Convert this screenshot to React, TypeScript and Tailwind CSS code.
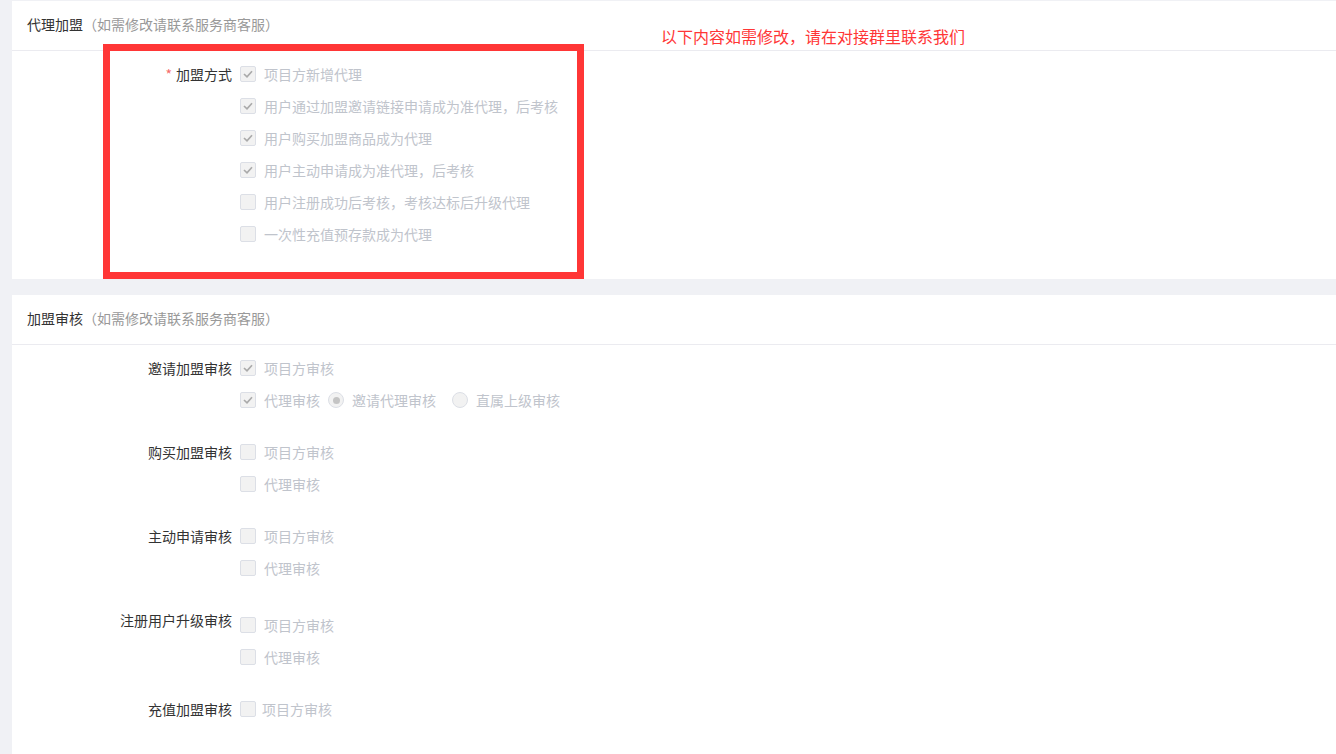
import React from "react";

const font = { fontFamily: '"Noto Sans CJK SC", "Microsoft YaHei", sans-serif' };

function Check({ checked }: { checked?: boolean }) {
  return (
    <span className="w-4 h-4 rounded-[2px] border border-[#dcdfe6] bg-[#f2f2f2] flex items-center justify-center shrink-0">
      {checked && (
        <svg width="10" height="8" viewBox="0 0 10 8">
          <path d="M1 4 L4 6.8 L9 1.3" fill="none" stroke="#aaaaaa" strokeWidth="1.7" />
        </svg>
      )}
    </span>
  );
}

function Radio({ checked }: { checked?: boolean }) {
  return (
    <span className="w-4 h-4 rounded-full border border-[#dcdfe6] bg-[#f2f2f2] flex items-center justify-center shrink-0">
      {checked && <span className="w-[7px] h-[7px] rounded-full bg-[#c4c4c4]" />}
    </span>
  );
}

function CheckItem({ label, checked, gap = "ml-2" }: { label: string; checked?: boolean; gap?: string }) {
  return (
    <span className="flex items-center">
      <Check checked={checked} />
      <span className={`${gap} text-[14px] text-[#c0c4cc] whitespace-nowrap`}>{label}</span>
    </span>
  );
}

function Row({ children }: { children: React.ReactNode }) {
  return <div className="h-8 flex items-center">{children}</div>;
}

function Group({
  label,
  required,
  children,
  offset,
}: {
  label: string;
  required?: boolean;
  children: React.ReactNode;
  offset?: boolean;
}) {
  return (
    <div className="flex">
      <div className="w-[220px] h-8 flex items-center justify-end text-[14px] text-[#333] whitespace-nowrap">
        {required && <span className="text-[#f56c6c] mr-1">*</span>}
        {label}
      </div>
      <div className={`ml-2 flex flex-col ${offset ? "pt-[5px]" : ""}`}>{children}</div>
    </div>
  );
}

function CardHeader({ title }: { title: string }) {
  return (
    <div className="h-[50px] border-b border-[#ebebf0] flex items-center pl-[15px] pb-[2px]">
      <span className="text-[14px] text-[#333]">{title}</span>
      <span className="text-[14px] text-[#999]">（如需修改请联系服务商客服）</span>
    </div>
  );
}

export default function App() {
  return (
    <div className="w-[1336px] h-[754px] overflow-hidden bg-[#f0f1f5] relative" style={font}>
      <div className="pl-3 pt-[1px]">
        <div className="bg-white">
          <CardHeader title="代理加盟" />
          <div className="pt-[7px] pb-[29px]">
            <Group label="加盟方式" required>
              <Row><CheckItem label="项目方新增代理" checked /></Row>
              <Row><CheckItem label="用户通过加盟邀请链接申请成为准代理，后考核" checked /></Row>
              <Row><CheckItem label="用户购买加盟商品成为代理" checked /></Row>
              <Row><CheckItem label="用户主动申请成为准代理，后考核" checked /></Row>
              <Row><CheckItem label="用户注册成功后考核，考核达标后升级代理" /></Row>
              <Row><CheckItem label="一次性充值预存款成为代理" /></Row>
            </Group>
          </div>
        </div>
        <div className="bg-white mt-4 h-[500px]">
          <CardHeader title="加盟审核" />
          <div className="pt-[7px] flex flex-col gap-5">
            <Group label="邀请加盟审核">
              <Row><CheckItem label="项目方审核" checked /></Row>
              <Row>
                <CheckItem label="代理审核" checked />
                <span className="ml-2 flex items-center">
                  <Radio checked />
                  <span className="ml-2 text-[14px] text-[#c0c4cc]">邀请代理审核</span>
                </span>
                <span className="ml-4 flex items-center">
                  <Radio />
                  <span className="ml-2 text-[14px] text-[#c0c4cc]">直属上级审核</span>
                </span>
              </Row>
            </Group>
            <Group label="购买加盟审核">
              <Row><CheckItem label="项目方审核" /></Row>
              <Row><CheckItem label="代理审核" /></Row>
            </Group>
            <Group label="主动申请审核">
              <Row><CheckItem label="项目方审核" /></Row>
              <Row><CheckItem label="代理审核" /></Row>
            </Group>
            <Group label="注册用户升级审核" offset>
              <Row><CheckItem label="项目方审核" /></Row>
              <Row><CheckItem label="代理审核" /></Row>
            </Group>
            <Group label="充值加盟审核">
              <Row><CheckItem label="项目方审核" gap="ml-[6px]" /></Row>
            </Group>
          </div>
        </div>
      </div>

      <div className="absolute left-[103px] top-[44px] w-[481px] h-[235px] border-[7px] border-[#ff3636] pointer-events-none" />
      <div className="absolute left-[661px] top-[25px] text-[16px] leading-[22px] text-[#ff3636] whitespace-nowrap">
        以下内容如需修改，请在对接群里联系我们
      </div>
    </div>
  );
}
